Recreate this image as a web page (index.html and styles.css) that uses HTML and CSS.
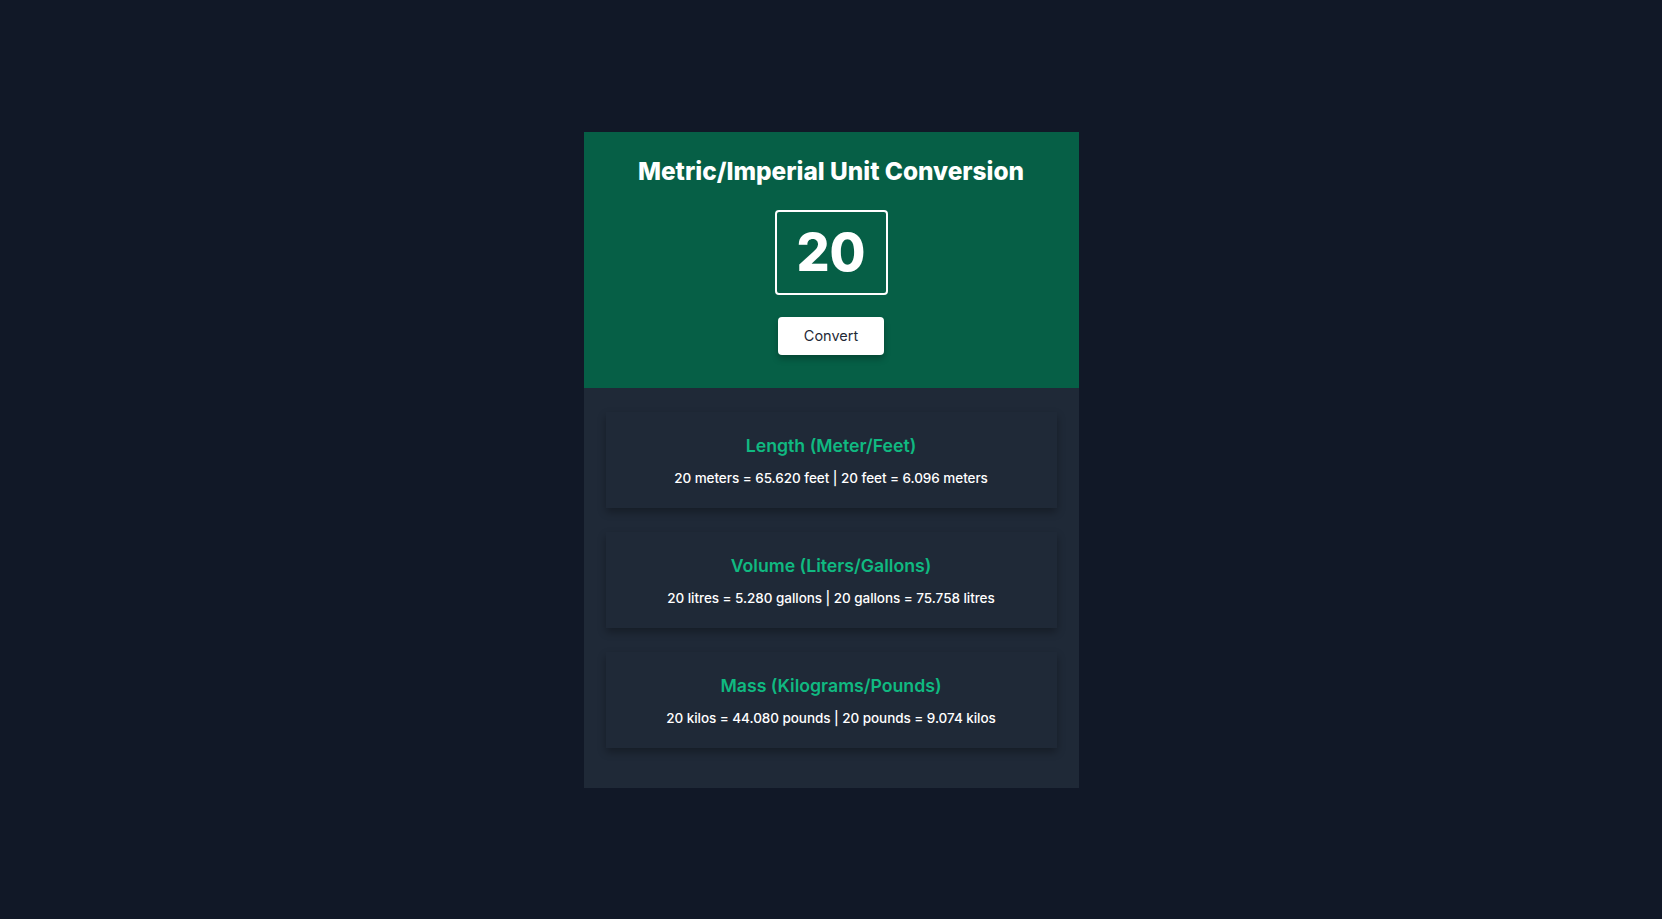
FILE: index.html
```html
<!DOCTYPE html>
<html lang="en">
<head>
<meta charset="utf-8">
<title>Unit Conversion</title>
<link rel="stylesheet" href="styles.css">
</head>
<body>
<main class="app">
  <header class="hero">
    <h1 class="title">Metric/Imperial Unit Conversion</h1>
    <div class="value-box">20</div>
    <button class="convert-btn" type="button">Convert</button>
  </header>
  <section class="results">
    <article class="result-card">
      <h2 class="result-title">Length (Meter/Feet)</h2>
      <p class="result-text">20 meters = 65.620 feet | 20 feet = 6.096 meters</p>
    </article>
    <article class="result-card">
      <h2 class="result-title">Volume (Liters/Gallons)</h2>
      <p class="result-text">20 litres = 5.280 gallons | 20 gallons = 75.758 litres</p>
    </article>
    <article class="result-card">
      <h2 class="result-title">Mass (Kilograms/Pounds)</h2>
      <p class="result-text">20 kilos = 44.080 pounds | 20 pounds = 9.074 kilos</p>
    </article>
  </section>
</main>
</body>
</html>
```

FILE: styles.css
```css
* { box-sizing: border-box; }
html, body { height: 100%; }
body {
  margin: 0;
  background: #111827;
  font-family: Inter, "Noto Sans", sans-serif;
  display: flex;
  align-items: center;
  justify-content: center;
}
.app {
  width: 495px;
  display: flex;
  flex-direction: column;
}
.hero {
  background: #065f46;
  height: 256px;
  padding: 23px 0 32px;
  display: flex;
  flex-direction: column;
  align-items: center;
}
.title {
  margin: 0;
  color: #fff;
  font-size: 24.4px;
  line-height: 32px;
  font-weight: 800;
}
.value-box {
  margin-top: 23px;
  width: 113px;
  height: 85px;
  border: 2px solid #fff;
  border-radius: 4px;
  color: #fff;
  font-size: 52px;
  font-weight: 800;
  display: flex;
  align-items: center;
  justify-content: center;
}
.convert-btn {
  margin-top: 22px;
  width: 106px;
  height: 38px;
  border: none;
  border-radius: 4px;
  background: #fff;
  color: #1f2937;
  font-family: inherit;
  font-size: 14.5px;
  box-shadow: 0 4px 6px rgba(0, 0, 0, 0.25);
}
.results {
  background: #1f2937;
  padding: 24px 22px 40px;
  display: flex;
  flex-direction: column;
  gap: 24px;
}
.result-card {
  background: #1f2937;
  padding: 20px;
  text-align: center;
  box-shadow: 0 4px 8px rgba(0, 0, 0, 0.3);
}
.result-title {
  margin: 0 0 8px;
  color: #10b981;
  font-size: 17.7px;
  line-height: 28px;
  font-weight: 600;
}
.result-text {
  margin: 0;
  color: #fff;
  font-size: 13.5px;
  line-height: 20px;
  font-weight: 500;
  letter-spacing: -0.05px;
}
```
